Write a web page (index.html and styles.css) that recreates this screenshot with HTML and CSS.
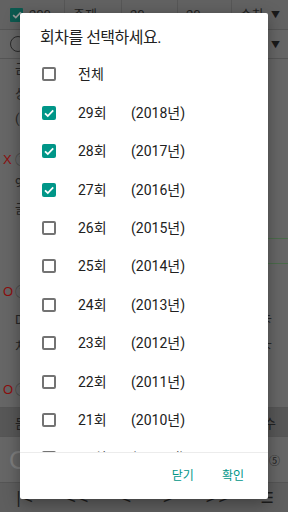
FILE: index.html
```html
<!DOCTYPE html>
<html lang="ko">
<head>
<meta charset="utf-8">
<link rel="stylesheet" href="styles.css">
</head>
<body>
<div class="app">
  <div class="toprow">
    <div class="cell cell-check"><span class="mini-check"><svg viewBox="0 0 14 14" width="12" height="12"><path d="M2.5 7.2 L5.6 10 L11.5 3.8" fill="none" stroke="#9a9a9a" stroke-width="2"/></svg></span><span class="cell-text">200</span></div>
    <div class="cell c2"><span class="cell-text">주제</span></div>
    <div class="cell c3"><span class="cell-text">20</span></div>
    <div class="cell c4"><span class="cell-text">20</span></div>
    <div class="cell c5"><span class="cell-text">순차</span><span class="arrow">▼</span></div>
  </div>
  <div class="row2">
    <span class="minus-circle"></span>
    <span class="arrow">▼</span>
  </div>
  <div class="content">
    <div class="q q1">
      <div class="qline"><span>금</span></div>
      <div class="qline"><span>상</span></div>
      <div class="qline"><span>(</span></div>
    </div>
    <div class="opt opt-x"><span class="mark">X</span><span class="num">①</span></div>
    <div class="q q2">
      <div class="qline"><span>9</span></div>
      <div class="qline"><span>글</span></div>
    </div>
    <div class="side-btn"></div>
    <div class="opt opt-o1"><span class="mark">O</span><span class="num">①</span></div>
    <div class="q q3">
      <div class="qline"><span>D</span><span>卡</span></div>
      <div class="qline"><span>처</span><span>卞</span></div>
    </div>
    <div class="opt opt-o2"><span class="mark">O</span><span class="num">①</span></div>
  </div>
  <div class="band"><span>듣</span><span>수</span></div>
  <div class="inputrow"><span class="big-o">O</span><span class="circ5">⑤</span></div>
  <div class="toolbar">
    <span class="tb">|&lt;</span><span class="tb">&lt;&lt;</span><span class="tb">&lt;</span><span class="tb">&gt;</span><span class="tb">&gt;&gt;</span><span class="tb menu">☰</span>
  </div>
</div>

<div class="dialog">
  <div class="dlg-title">회차를 선택하세요.</div>
  <div class="dlg-list">
    <div class="item"><span class="cb"></span><span class="no">전체</span></div>
    <div class="item"><span class="cb on"><svg viewBox="0 0 14 14"><path d="M3 7.3 L5.8 10 L11.2 4.4" fill="none" stroke="#fff" stroke-width="1.8"/></svg></span><span class="no">29회</span><span class="yr">(2018년)</span></div>
    <div class="item"><span class="cb on"><svg viewBox="0 0 14 14"><path d="M3 7.3 L5.8 10 L11.2 4.4" fill="none" stroke="#fff" stroke-width="1.8"/></svg></span><span class="no">28회</span><span class="yr">(2017년)</span></div>
    <div class="item"><span class="cb on"><svg viewBox="0 0 14 14"><path d="M3 7.3 L5.8 10 L11.2 4.4" fill="none" stroke="#fff" stroke-width="1.8"/></svg></span><span class="no">27회</span><span class="yr">(2016년)</span></div>
    <div class="item"><span class="cb"></span><span class="no">26회</span><span class="yr">(2015년)</span></div>
    <div class="item"><span class="cb"></span><span class="no">25회</span><span class="yr">(2014년)</span></div>
    <div class="item"><span class="cb"></span><span class="no">24회</span><span class="yr">(2013년)</span></div>
    <div class="item"><span class="cb"></span><span class="no">23회</span><span class="yr">(2012년)</span></div>
    <div class="item"><span class="cb"></span><span class="no">22회</span><span class="yr">(2011년)</span></div>
    <div class="item"><span class="cb"></span><span class="no">21회</span><span class="yr">(2010년)</span></div>
    <div class="item"><span class="cb"></span><span class="no">20회</span><span class="yr">(2009년)</span></div>
  </div>
  <div class="dlg-actions">
    <span class="btn">닫기</span>
    <span class="btn">확인</span>
  </div>
</div>
</body>
</html>
```
FILE: styles.css
```css
* { box-sizing: border-box; }
html, body { margin: 0; padding: 0; }
body {
  width: 288px;
  height: 512px;
  overflow: hidden;
  font-family: Roboto, "Noto Sans CJK KR", sans-serif;
  background: #666666;
  position: relative;
}

/* ---------- dimmed app behind the dialog ---------- */
.app {
  width: 288px;
  height: 512px;
  display: flex;
  flex-direction: column;
  background: #666666;
  color: #1f1f1f;
}
.toprow {
  height: 30px;
  flex: none;
  display: flex;
  border-bottom: 1px solid #555;
  background: #626262;
}
.cell {
  display: flex;
  align-items: center;
  border-right: 1px solid #575757;
  font-size: 13px;
  line-height: 16px;
  color: #222;
  padding-left: 8px;
}
.cell-check { width: 65px; padding-left: 10px; gap: 6px; }
.c2 { width: 57px; }
.c3 { width: 56px; }
.c4 { width: 54px; }
.c5 { flex: 1; border-right: none; justify-content: space-between; padding-right: 8px; }
.mini-check {
  width: 13px; height: 14px;
  background: #0c5a50;
  border-radius: 1px;
  display: flex; align-items: center; justify-content: center;
}
.arrow { font-size: 9px; color: #1a1a1a; }
.row2 {
  height: 29px;
  flex: none;
  display: flex;
  align-items: center;
  justify-content: space-between;
  padding: 0 8px 0 10px;
  border-bottom: 1px solid #555;
}
.minus-circle {
  width: 16px; height: 16px;
  border: 1px solid #2a2a2a;
  border-radius: 50%;
}
.content {
  flex: 1;
  min-height: 0;
  display: flex;
  flex-direction: column;
  padding-left: 15px;
  padding-right: 16px;
  font-size: 13px;
  color: #262626;
  border-bottom: 1px solid #555;
  overflow: hidden;
}
.q1 { margin-top: -3px; }
.qline {
  height: 25px;
  line-height: 25px;
  white-space: nowrap;
  display: flex;
  justify-content: space-between;
}
.opt {
  display: flex;
  align-items: center;
  margin-left: -12px;
  gap: 3px;
  height: 20px;
  flex: none;
  line-height: 20px;
}
.mark { color: #8c0e0e; font-size: 13px; width: 9px; font-family: "Liberation Sans", sans-serif; }
.num { color: #3a3a3a; font-size: 13px; }
.opt-x { margin-top: 19px; }
.q2 .qline { height: 26px; line-height: 26px; }
.side-btn {
  align-self: flex-end;
  margin-right: -20px;
  width: 40px;
  height: 26px;
  flex: none;
  border: 1px solid #4b6b4b;
  border-radius: 4px;
  margin-top: 16px;
}
.opt-o1 { margin-top: 18px; }
.q3 { margin-top: 4px; }
.q3 .qline { height: 27px; line-height: 27px; }
.opt-o2 { margin-top: 20px; }
.band {
  height: 29px;
  flex: none;
  background: #575757;
  display: flex;
  align-items: center;
  justify-content: space-between;
  padding: 0 12px 0 15px;
  font-size: 13px;
  color: #222;
  border-bottom: 1px solid #555;
}
.inputrow {
  height: 46px;
  flex: none;
  display: flex;
  align-items: center;
  justify-content: space-between;
  padding: 0 8px 0 9px;
  border-bottom: 1px solid #555;
}
.big-o { font-size: 26px; line-height: 30px; color: #7d7d7d; font-family: "Liberation Sans", sans-serif; }
.circ5 { font-size: 11px; color: #222; }
.toolbar {
  height: 29px;
  flex: none;
  display: flex;
  align-items: center;
  justify-content: space-between;
  padding: 0 14px 0 16px;
  background: #5e5e5e;
  font-size: 15px;
  line-height: 20px;
  color: #1c1c1c;
  font-family: "DejaVu Sans", sans-serif;
}

/* ---------- dialog ---------- */
.dialog {
  position: absolute;
  left: 20px;
  top: 12.7px;
  width: 248px;
  height: 486.6px;
  background: #fff;
  border-radius: 2px;
  box-shadow: 0 4px 16px rgba(0,0,0,0.35);
  display: flex;
  flex-direction: column;
  overflow: hidden;
}
.dlg-title {
  height: 42.6px;
  flex: none;
  padding: 15px 0 0 20px;
  font-size: 16px;
  line-height: 20px;
  letter-spacing: -0.5px;
  color: #212121;
  white-space: nowrap;
}
.dlg-list {
  flex: 1;
  min-height: 0;
  overflow: hidden;
  border-bottom: 1px solid #ececec;
}
.item {
  height: 38.4px;
  display: flex;
  align-items: center;
  padding-left: 22px;
  font-size: 14px;
  line-height: 18px;
  color: #212121;
}
.cb {
  width: 14px;
  height: 14px;
  border: 2px solid #737373;
  border-radius: 2px;
  flex: none;
  display: flex;
  align-items: center;
  justify-content: center;
}
.cb.on { background: #009688; border: none; }
.cb.on svg { width: 14px; height: 14px; display: block; }
.no { margin-left: 22px; width: 53px; flex: none; }
.dlg-actions {
  height: 46px;
  flex: none;
  display: flex;
  justify-content: flex-end;
  align-items: center;
  gap: 28px;
  padding-right: 24px;
}
.btn {
  font-size: 12px;
  line-height: 16px;
  color: #009688;
}
```
